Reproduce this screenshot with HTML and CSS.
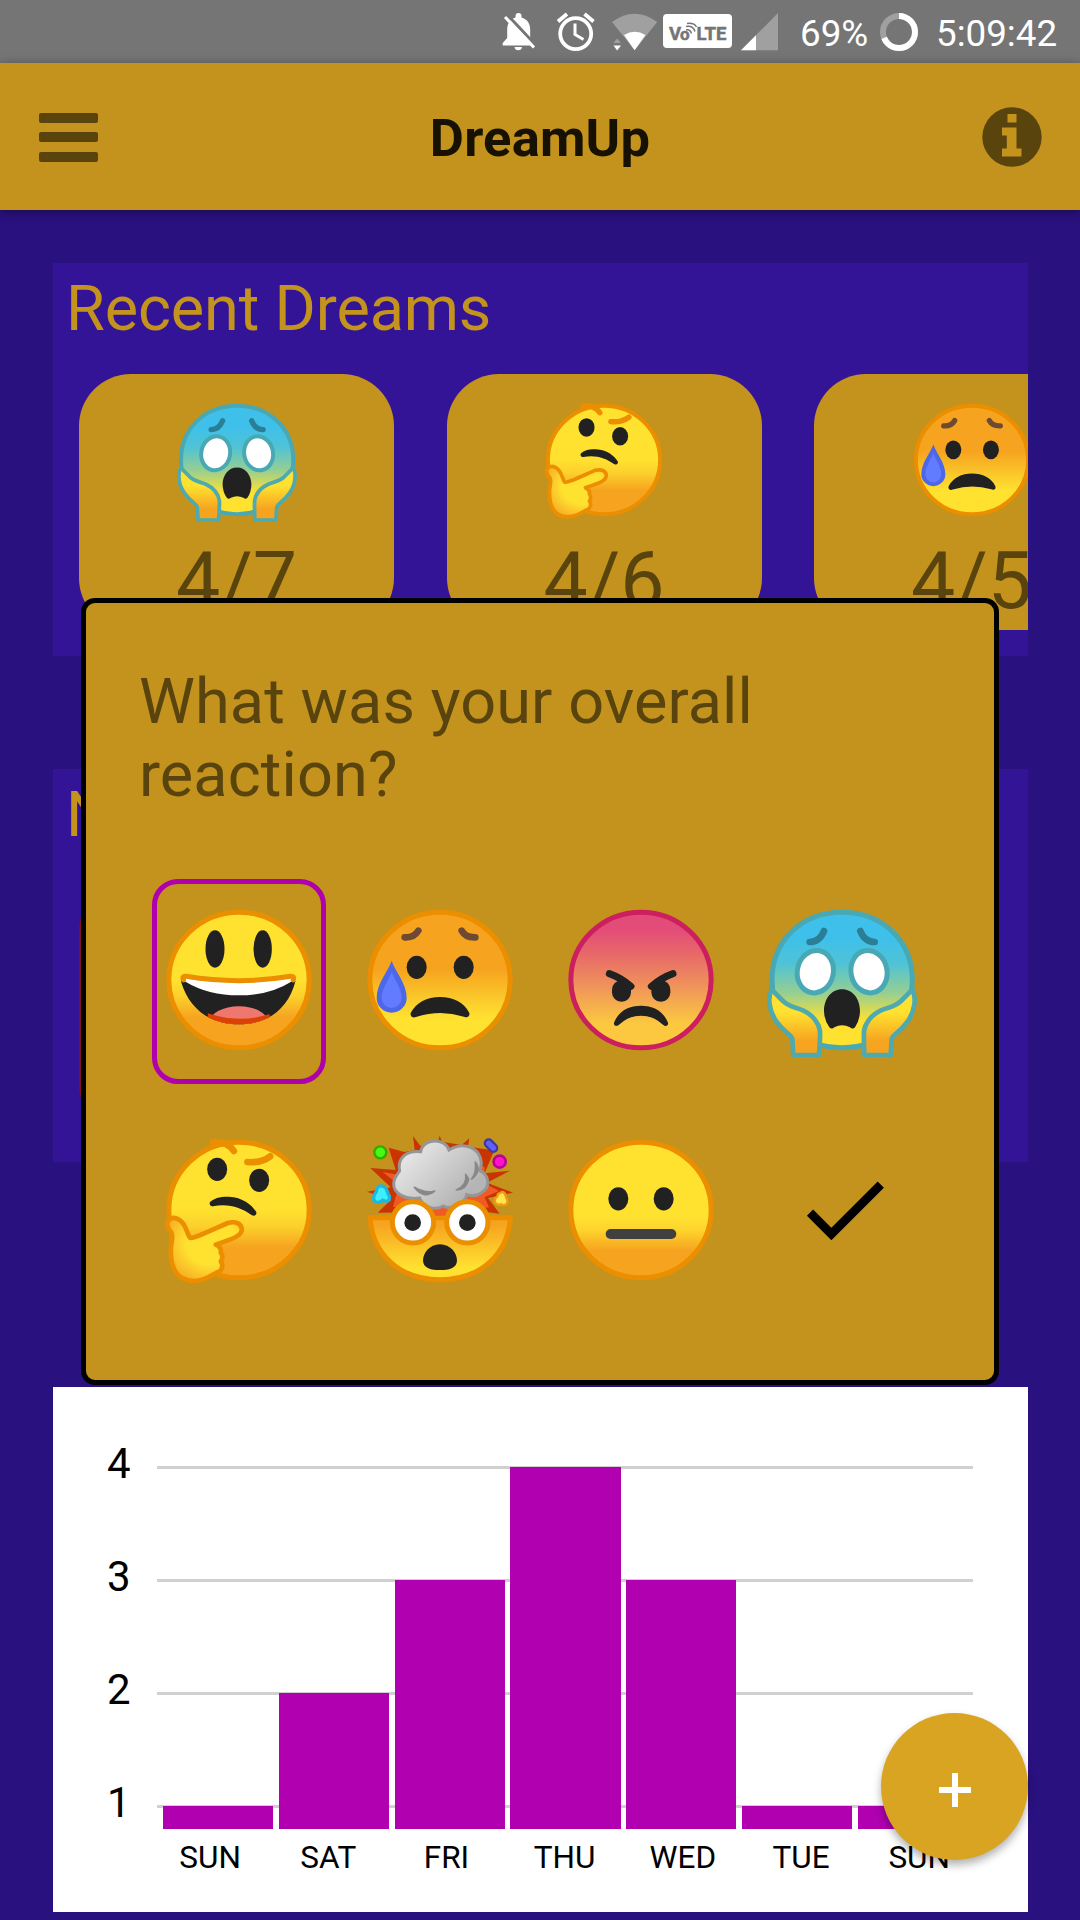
FILE: index.html
```html
<!DOCTYPE html>
<html lang="en">
<head>
<meta charset="utf-8">
<title>DreamUp</title>
<link rel="stylesheet" href="styles.css">
</head>
<body>
<svg class="defs" width="0" height="0" aria-hidden="true">
  <defs>
    <linearGradient id="warm" x1="0" y1="0" x2="0" y2="1"><stop offset=".5" stop-color="#ffe130"/><stop offset=".62" stop-color="#fcd02c"/><stop offset=".78" stop-color="#f6a31f"/></linearGradient>
    <linearGradient id="low" x1="0" y1="0" x2="0" y2="1"><stop offset=".55" stop-color="#ffe130"/><stop offset=".65" stop-color="#fdd42c"/><stop offset=".8" stop-color="#f6a31f"/></linearGradient>
    <linearGradient id="sadfill" x1="0" y1="0" x2="0" y2="1"><stop offset=".42" stop-color="#f6a31f"/><stop offset=".65" stop-color="#fbcb2b"/><stop offset=".78" stop-color="#ffe130"/></linearGradient>
    <linearGradient id="rage" x1="0" y1="0" x2="0" y2="1"><stop offset=".12" stop-color="#e34b79"/><stop offset=".3" stop-color="#e76769"/><stop offset=".55" stop-color="#f0945a"/><stop offset=".82" stop-color="#fbc83f"/></linearGradient>
    <linearGradient id="fear" x1="0" y1="0" x2="0" y2="1"><stop offset=".2" stop-color="#3fc0ea"/><stop offset=".38" stop-color="#4fc3d6"/><stop offset=".6" stop-color="#98cf90"/><stop offset=".8" stop-color="#ffe130"/></linearGradient>
    <linearGradient id="palm" x1="0" y1="0" x2="0" y2="1"><stop offset=".35" stop-color="#ffe130"/><stop offset=".8" stop-color="#f6a31f"/></linearGradient>
    <linearGradient id="mind" x1="0" y1="0" x2="0" y2="1"><stop offset=".1" stop-color="#f6a31f"/><stop offset=".8" stop-color="#ffe130"/></linearGradient>
    <linearGradient id="cloud" x1="0" y1="0" x2="1" y2=".7"><stop offset=".15" stop-color="#e8e8e8"/><stop offset=".9" stop-color="#b4b4b4"/></linearGradient>
    <radialGradient id="fist" cx=".6" cy=".4" r=".7"><stop offset=".5" stop-color="#ffe130"/><stop offset="1" stop-color="#f6a824"/></radialGradient>
    <clipPath id="mouth"><path d="M124 361Q210 395 298 395Q385 395 468 361C445 450 380 491 298 491S150 450 124 361Z"/></clipPath>
  </defs>

  <symbol id="happy" viewBox="58.5 118 480 480">
    <ellipse cx="298.5" cy="358" rx="210.5" ry="203.5" fill="url(#warm)" stroke="#eb8f00" stroke-width="15"/>
    <ellipse cx="226.500" cy="265" rx="28.500" ry="56" fill="#212121"/><ellipse cx="369.500" cy="265" rx="27.500" ry="56" fill="#212121"/>
    <path d="M124 361Q210 375 298 375Q385 375 468 361C445 450 380 491 298 491S150 450 124 361Z" fill="#212121"/>
    <g clip-path="url(#mouth)"><path d="M205 470Q298 476 390 465V500H205Z" fill="#db4105"/><ellipse cx="298" cy="482" rx="86" ry="45" fill="#ef7770"/><path d="M205 458Q298 490 390 460V500H205Z" fill="#db4105"/></g>
    <path d="M138 352Q298 371 455 352L455 363Q390 404 298 404T138 363Z" fill="#fff"/>
    <path d="M132 358Q126 346 140 347Q298 373 453 347Q466 346 461 358" fill="none" stroke="#eb8f00" stroke-width="15" stroke-linecap="round"/>
  </symbol>

  <symbol id="sad" viewBox="661 118 480 480">
    <ellipse cx="901" cy="358" rx="210.500" ry="203.500" fill="url(#sadfill)" stroke="#eb8f00" stroke-width="15"/>
    <path d="M795 230Q823 232 836 210M966 210Q977 231 1007 230" fill="none" stroke="#6e4a35" stroke-width="20" stroke-linecap="round"/>
    <ellipse cx="831" cy="320" rx="30" ry="35" fill="#212121"/><ellipse cx="972" cy="320" rx="30" ry="35" fill="#212121"/>
    <path d="M813 457C830 425 862 409 901 409S974 425 989 457C991 468 983 472 973 468Q901 446 829 469C818 473 811 467 813 457Z" fill="#212121"/>
    <path d="M756 300C767 333 801 368 801 411A45 45 0 0 1 711 411C711 368 745 333 756 300Z" fill="#4c67e8"/>
    <path d="M756 333C765 358 786 384 786 411A30 31 0 0 1 726 411C726 384 747 358 756 333Z" fill="#637bff"/>
  </symbol>

  <symbol id="angry" viewBox="64 118 480 480">
    <ellipse cx="304" cy="358" rx="210.500" ry="203.500" fill="url(#rage)" stroke="#cc1f60" stroke-width="15"/>
    <g fill="#212121"><rect x="217" y="359" width="57" height="64" rx="28"/><rect x="335" y="359" width="57" height="64" rx="28"/>
    <path d="M223 486C236 452 266 435 304 435S372 452 385 486C387 496 377 499 370 492Q340 465 304 465T238 492C230 499 221 495 223 486Z"/></g>
    <path d="M209 339Q243 351 274 377M400 339Q366 351 335 377" fill="none" stroke="#212121" stroke-width="21" stroke-linecap="round"/>
  </symbol>

  <symbol id="scream" viewBox="667 118 480 480">
    <path d="M907 154.500C1028 154.500 1118 240 1118 358S1028 561 907 561S697 476 697 358S786 154.500 907 154.500Z" fill="url(#fear)" stroke="#48a9b5" stroke-width="15"/>
    <path d="M810 244Q840 244 853 211M962 211Q975 244 1005 244" fill="none" stroke="#2a7f96" stroke-width="20" stroke-linecap="round"/>
    <g fill="#fff" stroke="#48a9b5" stroke-width="15"><ellipse cx="827" cy="333" rx="54" ry="64" transform="rotate(12 827 333)"/><ellipse cx="988" cy="333" rx="54" ry="64" transform="rotate(-12 988 333)"/></g>
    <path d="M907 386C939 386 961 415 961 451Q960 480 946 500Q939 507 931 500Q907 487 884 500Q876 507 869 500Q854 480 853 451C853 415 875 386 907 386Z" fill="#212121"/>
    <g fill="url(#palm)" stroke="#4eaaae" stroke-width="14" stroke-linejoin="round">
      <path d="M696 386C684 410 687 450 710 482C735 517 754 520 758 535L761 583H838Q842 530 841 512C838 488 820 463 790 449C765 438 750 440 730 421C716 407 705 396 696 386Z"/>
      <path d="M1118 386C1130 410 1127 450 1104 482C1079 517 1060 520 1056 535L1053 583H974Q972 530 973 512C976 488 994 463 1024 449C1049 438 1064 440 1084 421C1098 407 1109 396 1118 386Z"/>
    </g>
  </symbol>

  <symbol id="thinking" viewBox="58.5 61 480 480">
    <ellipse cx="298.500" cy="301" rx="210.500" ry="203.500" fill="url(#warm)" stroke="#eb8f00" stroke-width="15"/>
    <path d="M219 98Q263 94 283 124M324 157Q365 161 392 140" fill="none" stroke="#eb8f00" stroke-width="20" stroke-linecap="round"/>
    <g fill="#212121"><ellipse cx="233" cy="179" rx="30" ry="35"/><ellipse cx="359" cy="212" rx="30" ry="35"/><path d="M211 278C222 265 245 260 268 261C310 263 336 285 350 306C353 316 346 321 336 316C306 294 265 280 221 290C213 291 209 286 211 278Z"/></g>
    <path d="M84 348C79 326 104 319 120 331C140 343 141 370 151 384C160 388 190 373 265 340C290 333 307 343 307 360C306 380 276 389 229 405C241 410 246 417 244 429C250 437 250 446 244 455C250 464 250 475 241 485C220 491 205 513 164 514C118 514 94 483 94 425C93 398 104 380 95 367Q87 361 84 348Z" fill="url(#fist)" stroke="#eb8f00" stroke-width="14" stroke-linejoin="round"/>
  </symbol>

  <symbol id="mindblown" viewBox="661 60 480 480">
    <path d="M820 78L842 108L895 95L900 77L907 95L966 105L989 85L985 110L1040 118L1062 125L1035 190L1112 182L1042 218L1120 248L1045 264L1080 311L960 295L845 307L714 308L753 270L682 245L753 232L692 174L768 180L747 113L795 126L825 120Z" fill="#c93401"/>
    <path d="M790 150L780 195L729 186L778 225L760 290L903 315L1048 292L1035 262L1078 243L1035 220L1035 170Z" fill="#f05a24"/>
    <path d="M780 183C772 145 800 120 843 125C850 82 918 84 928 120C974 91 1022 115 1025 158Q1025 170 1020 182C1047 192 1054 230 1027 247C1015 257 998 259 981 254C979 278 930 302 911 288C888 303 850 292 840 264C799 271 760 250 762 221C763 202 774 192 780 183Z" fill="url(#cloud)" stroke="#969696" stroke-width="9"/>
    <path d="M824 232Q852 269 885 243Q858 252 824 232ZM978 193Q984 225 950 240Q981 238 987 207ZM1007 156Q1027 184 996 207Q1011 190 1007 156Z" fill="#888" stroke="#888" stroke-width="5" stroke-linejoin="round"/>
    <path d="M691 323H1112C1106 430 1025 509 901 509S698 430 691 323Z" fill="url(#mind)" stroke="#eb8f00" stroke-width="15"/>
    <path d="M863 317L911 292L942 317Z" fill="#f05a24"/>
    <g fill="#fff" stroke="#eb8f00" stroke-width="15"><circle cx="820" cy="337" r="62"/><circle cx="983" cy="337" r="62"/></g>
    <circle cx="819" cy="338" r="25" fill="#212121"/><circle cx="983" cy="338" r="25" fill="#212121"/>
    <path d="M901 403C932 403 952 429 952 452C951 475 927 480 901 480S851 475 850 452C850 429 870 403 901 403Z" fill="#212121"/>
    <circle cx="722" cy="127" r="18" fill="#47fa14" stroke="#35a900" stroke-width="7"/>
    <circle cx="1080" cy="155" r="18" fill="#ff14ce" stroke="#bb0098" stroke-width="8"/>
    <path d="M1047 100L1061 114" stroke="#3e3a9c" stroke-width="30" stroke-linecap="round"/><path d="M1047 100L1061 114" stroke="#6060ff" stroke-width="16" stroke-linecap="round"/>
    <path d="M727 228C746 231 740 248 749 258C752 276 739 276 729 271C715 283 699 276 702 261C703 249 712 249 711 238Q716 226 727 228Z" fill="#3df0ff" stroke="#1db8df" stroke-width="10"/>
    <path d="M1087 246C1101 245 1095 260 1103 269C1107 284 1093 288 1084 283C1069 288 1061 276 1068 264Q1074 261 1075 252Z" fill="#ffe651" stroke="#f29a10" stroke-width="7"/>
  </symbol>

  <symbol id="neutral" viewBox="64 58 480 480">
    <ellipse cx="304" cy="298" rx="210.500" ry="203.500" fill="url(#low)" stroke="#eb8f00" stroke-width="15"/>
    <ellipse cx="236" cy="264.500" rx="30" ry="35" fill="#212121"/><ellipse cx="372" cy="264.500" rx="30" ry="35" fill="#212121"/>
    <rect x="198" y="355" width="212" height="30" rx="15" fill="#404040"/>
  </symbol>
</svg>

<div class="screen">
  <div class="status">
    <svg class="status-icon" width="34" height="42" viewBox="502 11 34 42" fill="#fff">
      <path d="M518.500 13a3 3 0 0 1 3 3v1.500c5.500 1.500 8.700 6 8.700 12V38l4 5v2.500h-31.500V43l4.500-5v-8.500c0-6 3-10.500 8.300-12V16a3 3 0 0 1 3-3zM514.500 47h7.500a3.800 3.800 0 0 1-7.500 0z"/>
      <path d="M508 15.500L537 46.500" stroke="#757575" stroke-width="3"/><path d="M505 17L534 47.500" stroke="#fff" stroke-width="3"/>
    </svg>
    <svg class="status-icon alarm" width="38" height="42" viewBox="557 11 38 42" fill="none" stroke="#fff" stroke-width="3.800">
      <circle cx="575.700" cy="33.700" r="15.500"/><path d="M575 23.500V34.500L583.500 39.500" stroke-width="3"/><path d="M558 21.500L567 14M593.500 21.500L584.500 14"/>
    </svg>
    <svg class="status-icon wifi" width="46" height="42" viewBox="612 11 46 42" fill="#fff">
      <path d="M612 22Q634.600 5.500 657.200 22L634.600 50.300Z" fill="#a0a0a0"/><path d="M624 35Q634.600 28.500 645.500 35L634.600 50.300Z"/>
      <path d="M613.500 43L617.200 38.500L621 43Z" fill="#a0a0a0"/><path d="M613.500 45.500L617.200 50.500L621 45.500Z"/>
    </svg>
    <svg class="status-icon volte" width="69" height="42" viewBox="663 11 69 42">
      <rect x="663" y="14" width="69" height="34" rx="4" fill="#fff"/>
      <text class="volte-text" x="669" y="39.500">V</text><text class="volte-text volte-o" x="680" y="39.500">o</text><text class="volte-text" x="696.500" y="39.500">LTE</text>
      <path d="M686 30q4-1 5.500 3.500M686 26.500q7-1.500 9 5M687 23.500q7-1 9.500 3.500" fill="none" stroke="#757575" stroke-width="1.500"/>
    </svg>
    <svg class="status-icon signal" width="38" height="42" viewBox="741 11 38 42"><path d="M741 50.300L778 13V50.300Z" fill="#a0a0a0"/><path d="M741 50.300L756 35.200V50.300Z" fill="#fff"/></svg>
    <span class="battery-level">69%</span>
    <svg class="status-icon battery" width="40" height="42" viewBox="879 10 40 42" fill="none" stroke-width="6"><circle cx="899" cy="31" r="16" stroke="#a0a0a0"/><circle cx="899" cy="31" r="16" stroke="#fff" pathLength="100" stroke-dasharray="69 31" transform="rotate(-90 899 31)"/></svg>
    <span class="clock">5:09:42</span>
  </div>

  <header class="header">
    <svg width="59" height="49" viewBox="0 0 59 49" fill="#5a440d"><rect width="59" height="10" rx="2"/><rect y="19" width="59" height="10" rx="2"/><rect y="39" width="59" height="10" rx="2"/></svg>
    <h1 class="title">DreamUp</h1>
    <svg width="60" height="60" viewBox="0 0 60 60"><circle cx="30" cy="30" r="29.700" fill="#5a440d"/><path d="M25.500 7h9v8.500h-9zM20 20.500H34.500V41.500H39.500V49.500H20V41.500H24.800V28.500H20z" fill="#c4931d"/></svg>
  </header>

  <main class="content">
    <section class="panel">
      <h2 class="panel-title">Recent Dreams</h2>
      <div class="cards">
        <div class="card"><svg class="card-emoji"><use href="#scream"/></svg><span class="date">4/7</span></div>
        <div class="card"><svg class="card-emoji"><use href="#thinking"/></svg><span class="date">4/6</span></div>
        <div class="card"><svg class="card-emoji"><use href="#sad"/></svg><span class="date">4/5</span></div>
      </div>
    </section>
    <section class="panel">
      <h2 class="panel-title">N</h2>
      <div class="cards"><div class="card card-red"></div></div>
    </section>
    <section class="chart">
      <div class="y-axis"><span>4</span><span>3</span><span>2</span><span>1</span></div>
      <div class="plot">
        <div class="lines"><i></i><i></i><i></i><i></i></div>
        <div class="bars">
          <div class="bar" style="height:22.800px"></div><div class="bar" style="height:135.700px"></div><div class="bar" style="height:248.600px"></div><div class="bar" style="height:361.500px"></div><div class="bar" style="height:248.600px"></div><div class="bar" style="height:22.800px"></div><div class="bar" style="height:22.800px"></div>
        </div>
      </div>
      <div class="x-axis"><span>SUN</span><span>SAT</span><span>FRI</span><span>THU</span><span>WED</span><span>TUE</span><span>SUN</span></div>
    </section>
  </main>

  <div class="modal">
    <p class="question">What was your overall reaction?</p>
    <div class="reactions">
      <div class="reaction selected"><svg class="emoji"><use href="#happy"/></svg></div>
      <div class="reaction"><svg class="emoji"><use href="#sad"/></svg></div>
      <div class="reaction"><svg class="emoji"><use href="#angry"/></svg></div>
      <div class="reaction"><svg class="emoji"><use href="#scream"/></svg></div>
      <div class="reaction"><svg class="emoji"><use href="#thinking"/></svg></div>
      <div class="reaction"><svg class="emoji"><use href="#mindblown"/></svg></div>
      <div class="reaction"><svg class="emoji"><use href="#neutral"/></svg></div>
      <div class="reaction"><svg class="check" width="105" height="105" viewBox="0 0 24 24"><path d="M9 16.170L4.830 12l-1.420 1.410L9 19 21 7l-1.410-1.410z"/></svg></div>
    </div>
  </div>

  <button class="fab" aria-label="Add dream"><svg width="32" height="34" viewBox="0 0 32 34"><path d="M16 0V34M0 17H32" stroke="#fff" stroke-width="6"/></svg></button>
</div>
</body>
</html>
```
FILE: styles.css
```css
* { box-sizing: border-box; }
body { margin: 0; font-family: Roboto, "Liberation Sans", sans-serif; }
svg { display: block; flex: none; }
.defs { position: absolute; }

.screen {
  position: relative;
  display: flex;
  flex-direction: column;
  width: 1080px;
  height: 1920px;
  overflow: hidden;
  background: #2a1180;
}

.status {
  display: flex;
  align-items: center;
  height: 63px;
  padding: 0 21px 0 502px;
  background: #757575;
  color: #fff;
  font-size: 36.75px;
}
.alarm { margin-left: 21px; }
.wifi { margin-left: 17px; }
.volte { margin-left: 5px; }
.signal { margin-left: 9px; }
.volte-text { fill: #757575; stroke: #757575; stroke-width: .5px; font-family: Roboto, "Liberation Sans", sans-serif; font-size: 18.5px; font-weight: 700; }
.volte-o { font-size: 17px; }
.battery-level { width: 100px; padding-left: 21px; margin-top: 3px; }
.clock { margin: 3px 0 0 17px; white-space: nowrap; }

.header {
  position: relative;
  display: flex;
  align-items: center;
  justify-content: space-between;
  height: 147px;
  padding: 1px 38px 0 39px;
  background: #c4931d;
  box-shadow: 0 2px 10px rgba(0, 0, 0, .4);
}
.title { margin: 2px 0 0; color: #171102; font-size: 52.5px; font-weight: 700; letter-spacing: .2px; }

.content { display: flex; flex-direction: column; padding: 53px 52px 0 53px; }
.panel {
  height: 393px;
  margin-bottom: 113px;
  overflow: hidden;
  background: #331496;
}
.panel-title {
  height: 98px;
  margin: 0;
  padding: 9px 13px 0;
  color: #c4931d;
  font-size: 63px;
  font-weight: 400;
  line-height: 74px;
  letter-spacing: -.15px;
}
.cards { display: flex; gap: 52.5px; margin-top: 13px; padding-left: 26px; }
.card {
  display: flex;
  flex: none;
  flex-direction: column;
  align-items: center;
  width: 315px;
  height: 256px;
  padding-top: 22px;
  border-radius: 52px;
  background: #c4931d;
}
.card-red { background: #7f1028; }
.card-emoji { width: 128px; height: 128px; }
.date { margin-top: 11px; color: #5a440d; font-size: 78.75px; line-height: 92px; }

.chart {
  display: grid;
  grid-template-columns: 104px 816px;
  grid-template-rows: 363px auto;
  height: 525px;
  margin-top: 112px;
  padding-top: 79px;
  background: #fff;
}
.y-axis { padding-left: 54px; margin-top: -27px; color: #000; font-size: 42px; line-height: 49px; }
.y-axis span { display: block; height: 112.9px; }
.plot { display: grid; grid-template-rows: 362.5px; }
.lines, .bars { grid-area: 1 / 1; }
.lines i { display: block; height: 112.9px; border-top: 3px solid #d0d0d0; }
.lines i:last-child { height: 3px; }
.bars { position: relative; display: flex; align-items: flex-end; gap: 5.5px; padding-left: 6px; }
.bar { flex: none; width: 110.3px; background: #b000b0; }
.x-axis {
  grid-column: 1 / 3;
  display: grid;
  grid-template-columns: repeat(7, 118.2px);
  padding: 10px 0 0 98px;
  font-size: 31.5px;
  line-height: 37px;
  text-align: center;
}

.modal {
  position: absolute;
  top: 598px;
  left: 81px;
  width: 918px;
  height: 787px;
  padding: 62px 52px 0;
  border: 5px solid #000;
  border-radius: 14px;
  background: #c4931d;
}
.question { width: 700px; margin: 0 0 0 1px; color: #5a440d; font-size: 63px; line-height: 73px; letter-spacing: .1px; }
.reactions {
  display: grid;
  grid-template-columns: repeat(4, 201px);
  grid-auto-rows: 230px;
  place-items: center;
  margin-top: 54px;
}
.emoji { width: 160px; height: 160px; }
.check { margin: -2px 0 0 5px; }
.selected {
  display: grid;
  place-items: center;
  width: 174px;
  height: 205px;
  margin-top: 3px;
  padding-bottom: 4px;
  border: 5px solid #af00ad;
  border-radius: 26px;
}

.fab {
  position: absolute;
  top: 1713px;
  left: 881px;
  display: grid;
  place-items: center;
  width: 147px;
  height: 147px;
  padding: 7px 0 0;
  border: 0;
  border-radius: 50%;
  background: #d9a421;
  box-shadow: 0 5px 9px rgba(0, 0, 0, .3);
}
```
